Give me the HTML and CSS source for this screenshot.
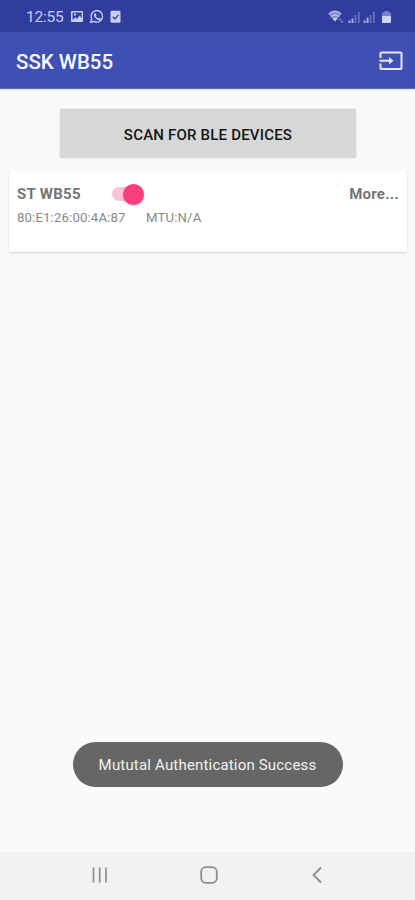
FILE: index.html
```html
<!DOCTYPE html>
<html lang="en">
<head>
<meta charset="utf-8">
<title>SSK WB55</title>
<link rel="stylesheet" href="styles.css">
</head>
<body>
<div class="screen">
  <div class="status-bar">
    <span class="clock">12:55</span>
    <svg class="notifications" width="52" height="16" viewBox="0 0 52 16">
      <path fill="#c9cef0" fill-rule="evenodd" d="M2 2h10q1 0 1 1v9q0 1-1 1H2q-1 0-1-1V3q0-1 1-1zM2.600 3.600v7.600l2.600-3 1.800 1.800 2.600-3.600 2 2.800V3.600zM4 4.600h2v2H4z"/>
      <path fill="none" stroke="#c9cef0" stroke-width="1.400" d="M20.700 13.300l1-3.200a5.800 5.800 0 1 1 2.300 2.300z"/>
      <path fill="#c9cef0" d="M24.300 4.600l1.300-.3.900 1.900-.7.900q.8 1.700 2.300 2.300l1-.8 1.700 1-.5 1.300q-1.300 1-3.700-.7-2.700-2.200-2.700-4z"/>
      <rect x="40.500" y="1.800" width="10" height="12" rx="1.200" fill="#c9cef0"/>
      <path fill="none" stroke="#3440a0" stroke-width="1.400" d="M42.800 7.800l2.100 2.100 3.600-4"/>
    </svg>
    <svg class="signals" width="66" height="18" viewBox="0 0 66 18">
      <path fill="#7f89cd" d="M.5 6Q7 .5 13.500 6L7 13.500z"/>
      <path fill="none" stroke="#b9c0ea" stroke-width="1.500" d="M.8 6q6.200-5.500 12.400 0M3 8.700q4-3.500 8 0"/>
      <path fill="#c3c9ee" d="M4.500 10.500q2.500-2 5 0L7 13.500z"/>
      <path fill="#8f98d4" d="M10.500 12.300l1.500-2 1.500 2zM12.500 13h3L14 15z"/>
      <g fill="#a4acdd">
        <path d="M20.500 12.500h2V15h-2zM23.500 10.500h2V15h-2z"/>
        <path d="M35.500 12.500h2V15h-2zM38.500 9.500h2V15h-2z"/>
      </g>
      <path fill="#6874bf" d="M26.700 7h1.700v8h-1.700zM30 4h1.700v11H30zM41.700 7h1.700v8h-1.700zM45 4h1.700v11H45z"/>
      <path fill="#7983c7" d="M56.500 3h4v1.500H63V8h-9V4.500h2.500z"/>
      <path fill="#d0d4f1" d="M54 8h9v6q0 1-1 1h-7q-1 0-1-1z"/>
    </svg>
  </div>
  <header class="app-bar">
    <h1 class="title">SSK WB55</h1>
    <svg class="exit" width="24" height="20" viewBox="0 0 24 20">
      <path fill="none" stroke="#e4e7fa" stroke-width="2" stroke-linejoin="round" d="M1.500 7V2.500q0-1 1-1h19q1 0 1 1v14.500q0 1-1 1h-19q-1 0-1-1V12.500"/>
      <path fill="#e4e7fa" d="M.5 8.700H10V5.900l4.500 3.850L10 13.600v-2.800H.5z"/>
    </svg>
  </header>
  <main class="content">
    <button class="scan"><span>SCAN FOR BLE DEVICES</span></button>
    <section class="card">
      <div class="device-row">
        <span class="name">ST WB55</span>
        <span class="switch"><span class="thumb"></span></span>
        <span class="more">More...</span>
      </div>
      <div class="detail-row">
        <span class="address">80:E1:26:00:4A:87</span>
        <span class="mtu">MTU:N/A</span>
      </div>
    </section>
  </main>
  <div class="toast"><span>Mututal Authentication Success</span></div>
  <nav class="nav-bar">
    <svg width="16" height="18" viewBox="0 0 16 18"><path fill="none" stroke="#8c8c8c" stroke-width="1.700" d="M1.500 1.500v15M7.700 1.500v15M14 1.500v15"/></svg>
    <svg class="home" width="18" height="18" viewBox="0 0 18 18"><rect x="1.200" y="1.200" width="15.600" height="15.600" rx="4.500" fill="none" stroke="#8c8c8c" stroke-width="1.800"/></svg>
    <svg width="10" height="18" viewBox="0 0 10 18"><path fill="none" stroke="#8c8c8c" stroke-width="1.800" d="M9 1.500L1.500 9 9 16.500"/></svg>
  </nav>
</div>
</body>
</html>
```
FILE: styles.css
```css
* { box-sizing: border-box; }
body { margin: 0; font-family: Roboto, "Liberation Sans", sans-serif; }
svg { display: block; flex: none; }
.screen {
  position: relative;
  display: flex;
  flex-direction: column;
  height: 900px;
  background: #fafafa;
}
.status-bar {
  display: flex;
  align-items: center;
  height: 32px;
  padding: 2px 21px 0 26px;
  background: #303d9e;
}
.clock { width: 44px; font-size: 15.500px; letter-spacing: -0.200px; color: #c9cef0; }
.notifications { margin-top: -1px; }
.signals { margin-left: auto; }
.app-bar {
  display: flex;
  align-items: center;
  justify-content: space-between;
  height: 57px;
  padding: 1px 12px 0 16px;
  background: #3f50b5;
  border-bottom: 1px solid #5a68bd;
  box-shadow: 0 1px 2px rgba(0, 0, 0, .12);
}
.title { margin: 0; padding-top: 2px; font-size: 20.500px; font-weight: 500; line-height: 28px; color: #f8f9ff; white-space: nowrap; }
.content {
  flex: 1;
  display: flex;
  flex-direction: column;
  padding: 20px 8px 0 9px;
}
.scan {
  align-self: center;
  width: 296px;
  height: 49px;
  padding: 3px 0 0;
  border: 0;
  border-radius: 2px;
  background: #d6d8d7;
  box-shadow: 0 0 2px rgba(0, 0, 0, .18);
  color: #151515;
  font: 500 15px Roboto, sans-serif;
  letter-spacing: 0.200px;
}
.card {
  height: 80px;
  margin-top: 14px;
  padding: 10px 8px;
  border-radius: 2px;
  background: #fff;
  box-shadow: 0 1px 2px rgba(0, 0, 0, .15);
}
.device-row { display: flex; align-items: center; height: 24px; font-size: 15px; font-weight: 700; color: #757575; }
.name { width: 95px; letter-spacing: 0.300px; }
.switch { display: flex; align-items: center; justify-content: flex-end; width: 32px; height: 14px; border-radius: 7px; background: #fcc3d7; }
.thumb { width: 21px; height: 21px; flex: none; border-radius: 50%; background: #fa3d7d; box-shadow: 0 1px 2px rgba(0, 0, 0, .2); }
.more { margin-left: auto; letter-spacing: 0.250px; }
.detail-row { display: flex; height: 22px; align-items: center; font-size: 13.200px; letter-spacing: 0.140px; color: #888; }
.address { width: 129px; }
.toast {
  align-self: center;
  display: flex;
  align-items: center;
  justify-content: center;
  width: 270px;
  height: 45px;
  margin-bottom: 65px;
  border-radius: 23px;
  background: #666;
  color: #f2f2f2;
  font-size: 15px;
  letter-spacing: 0.180px;
}
.nav-bar {
  display: flex;
  align-items: center;
  justify-content: space-between;
  height: 48px;
  padding: 0 93px 2px 92px;
  background: #f1f1f1;
}
.home { margin-right: 3px; }
```
